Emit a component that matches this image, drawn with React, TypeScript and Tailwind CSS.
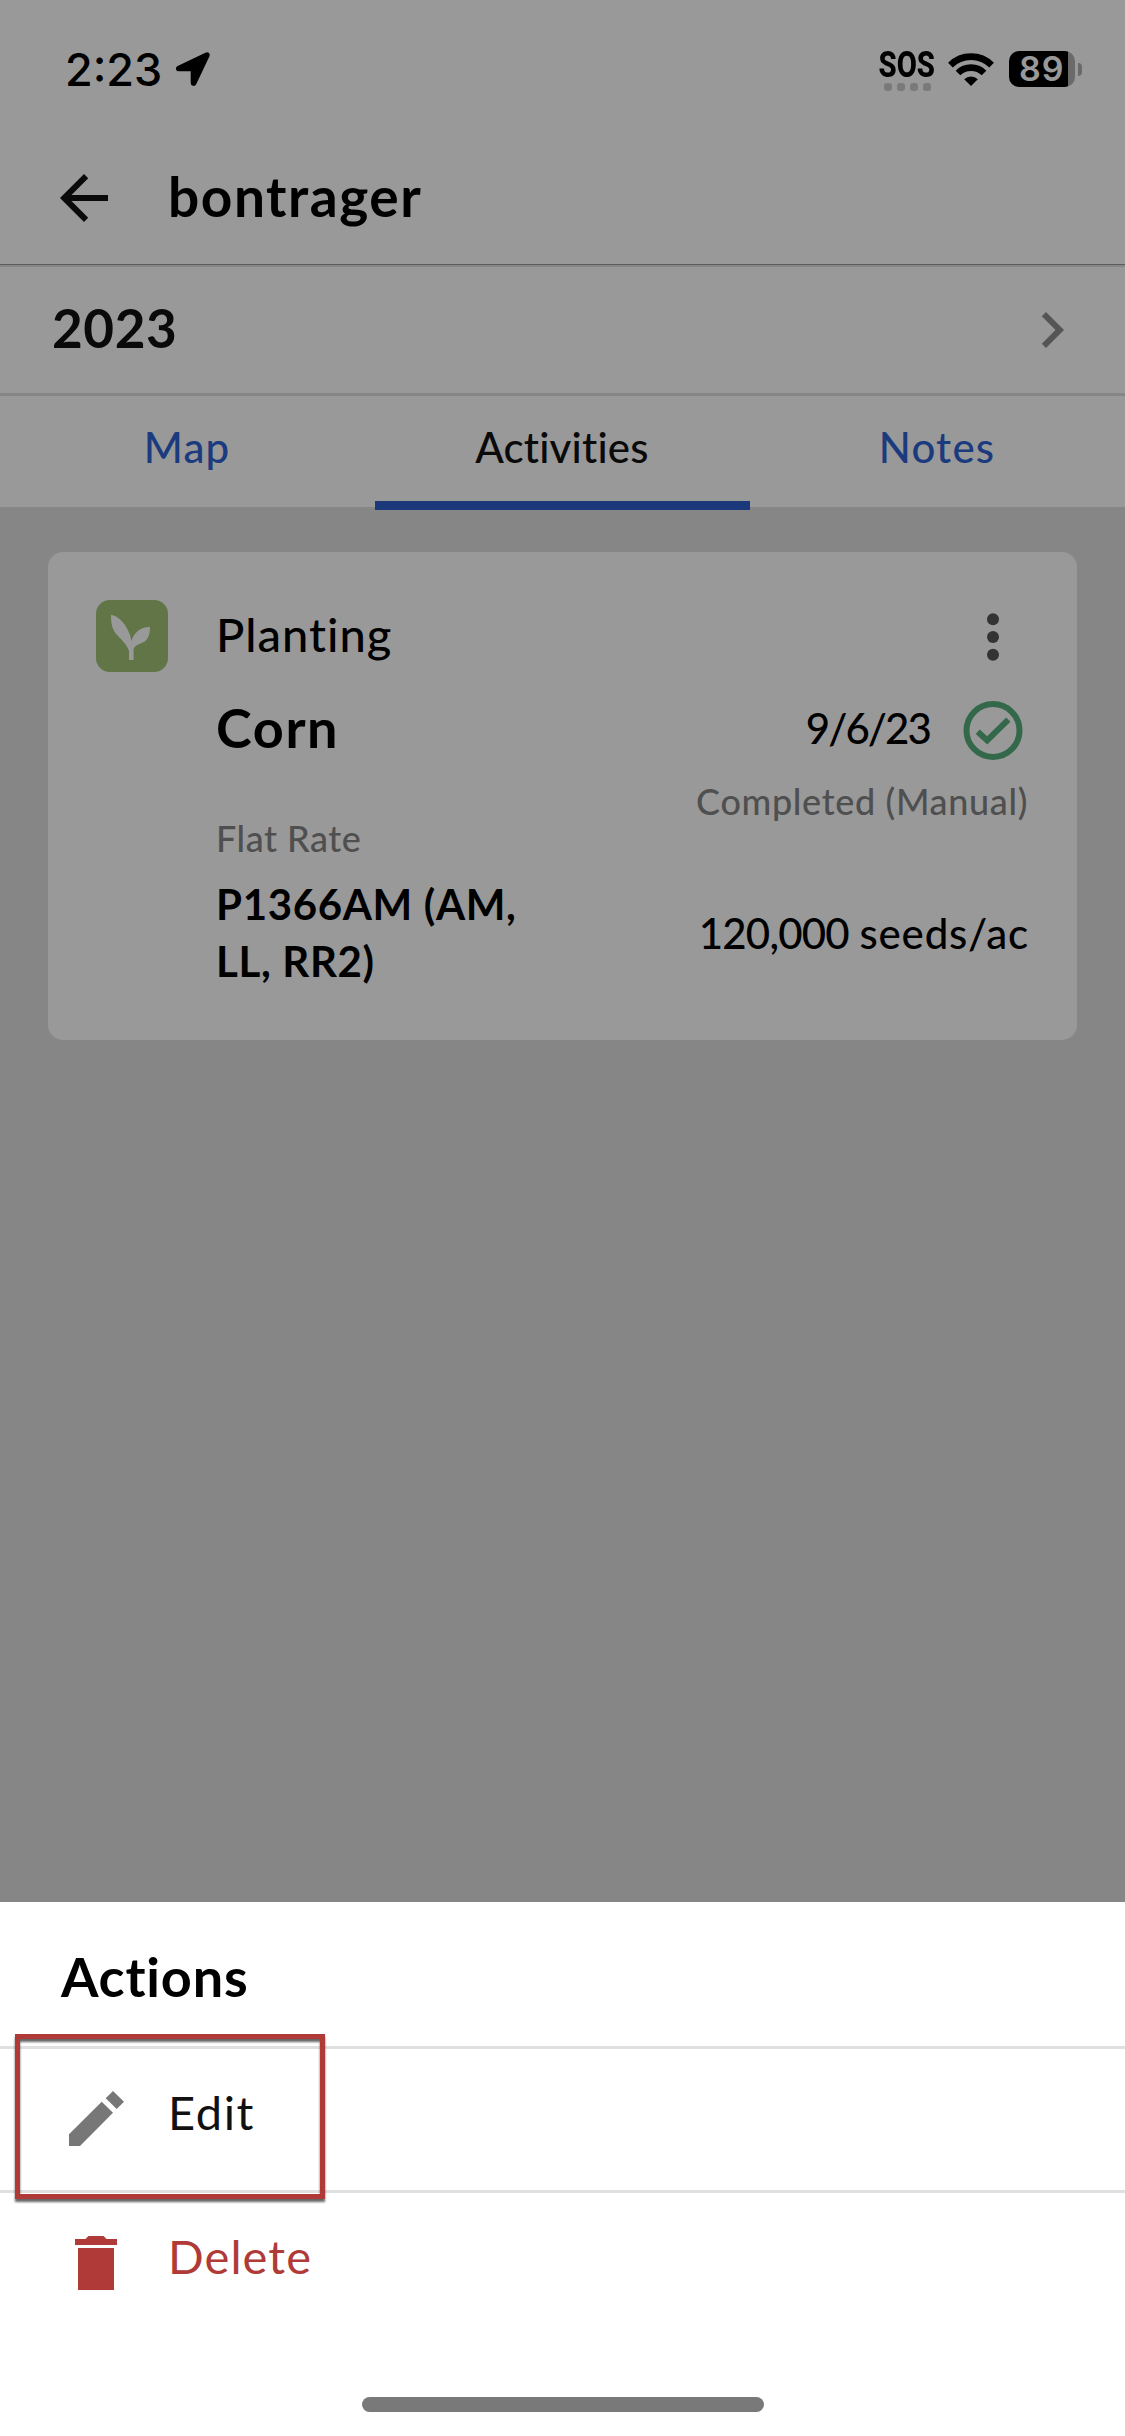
import React, { useState } from 'react';

const TABS = [
    { id: 'map', label: 'Map', spacing: 'tracking-[1.1px]' },
    { id: 'activities', label: 'Activities', spacing: 'tracking-[0.2px]' },
    { id: 'notes', label: 'Notes', spacing: 'tracking-[1.2px]' },
];

const StatusBar = () => (
    <div className="h-[138px] pl-[65px] pr-[43px] flex items-center justify-between text-black">
        <div className="flex items-center">
            <span className="w-[97px] font-[Inter,sans-serif] font-medium text-[45px] leading-none tracking-[0px]">2:23</span>
            <svg className="ml-[13px] w-9 h-9" viewBox="0 0 36 36">
                <path
                    d="M31.5 2.8 3.2 16.1c-1.6.8-1.1 2.9.6 2.9H17V32c0 1.8 2.3 2.2 3 .7L33.3 4.6c.6-1.3-.6-2.4-1.8-1.8Z"
                    fill="#000" stroke="#000" strokeWidth="2.6" strokeLinejoin="round"
                />
            </svg>
        </div>

        <div className="flex items-center">
            <div className="w-[54px] mt-1 flex flex-col items-center">
                <span className="font-[Roboto,sans-serif] font-extrabold text-[37px] leading-[28px] scale-x-[0.79]">SOS</span>
                <div className="mt-1 flex gap-[5px]">
                    {[0, 1, 2, 3].map((i) => (
                        <span key={i} className="w-2 h-2 rounded-[3px] bg-[#7a7a7a]" />
                    ))}
                </div>
            </div>
            <svg className="ml-[14px] w-[46px] h-[33px]" viewBox="0 0 46 33" fill="none" stroke="#000">
                <path d="M2.4 12.1a29.3 29.3 0 0 1 41.2 0" strokeWidth="6.6" />
                <path d="M10 20a18.5 18.5 0 0 1 26 0" strokeWidth="6.6" />
                <path d="M23 33 16.2 26.2a9.6 9.6 0 0 1 13.6 0Z" fill="#000" stroke="none" />
            </svg>
            {/* Bateria */}
            <div className="ml-[15px] w-[66px] h-9 rounded-[10px] bg-[linear-gradient(to_right,#000_59px,#6a6a6a_59px)] flex items-center">
                <span className="pl-[10px] font-[Inter,sans-serif] font-semibold text-[34px] leading-9 tracking-[1px] text-[#999]">89</span>
            </div>
            <span className="ml-[3px] w-1 h-[13px] rounded-r-full bg-[#6a6a6a]" />
        </div>
    </div>
);

const ActivityCard = () => (
    <div className="mx-12 mt-[45px] h-[488px] p-12 rounded-[15px] bg-[#999] flex text-black">
        <div className="w-[72px] h-[72px] rounded-[14px] bg-[#627547] shrink-0">
            <svg viewBox="0 0 72 72" className="w-full h-full" fill="#999">
                <path d="M15 15C25 16 34 30 35.4 41C38 33 44 27 54 27C54 36 51 41 46 43C41 44.5 38 46.5 37.6 49V60H33V51C31.5 46 27 41 22 36C16.5 30.5 15 25 15 15Z" />
            </svg>
        </div>

        <div className="ml-12 flex-1 flex flex-col">
            <div className="h-[72px] flex items-center justify-between">
                <span className="mb-[4px] text-[47px] font-medium tracking-[1px]">Planting</span>
                <svg className="mt-[2px] w-[72px] h-[72px]" viewBox="0 0 24 24" fill="#333">
                    <circle cx="12" cy="6.1" r="2" />
                    <circle cx="12" cy="12" r="2" />
                    <circle cx="12" cy="17.9" r="2" />
                </svg>
            </div>

            <div className="mt-[23px] h-[72px] flex items-center justify-between">
                <span className="mb-[8px] text-[54px] font-bold tracking-[1.6px]">Corn</span>
                <div className="flex items-center">
                    <span className="mr-[27px] mb-[6px] text-[42px] font-medium tracking-[-1.9px]">9/6/23</span>
                    <svg className="w-[72px] h-[72px]" viewBox="0 0 72 72" fill="none" stroke="#33694a" strokeWidth="6">
                        <circle cx="36" cy="35.5" r="26.5" />
                        <path d="M20.7 36.8 30.2 45.3 51.3 24.7" />
                    </svg>
                </div>
            </div>

            <div className="h-[107px] flex items-start justify-between text-[36px] leading-[48px] font-medium text-[#4f4f4f]">
                <span className="pt-[47px] tracking-[0.5px]">Flat Rate</span>
                <span className="pt-[10px] pr-px tracking-[0.65px]">Completed (Manual)</span>
            </div>

            <div className="mt-[2px] h-[114px] flex items-center justify-between text-[42px] leading-[57px]">
                <span className="w-[330px] font-bold tracking-[0.65px]">P1366AM (AM, LL, RR2)</span>
                <span className="font-medium">
                    <span className="tracking-[-0.8px]">120,000</span>{' '}
                    <span className="tracking-[0.8px]">seeds/ac</span>
                </span>
            </div>
        </div>
    </div>
);

const ActionSheet = () => (
    <div className="relative h-[534px] bg-white">
        <div className="h-[147px] pl-[61px] border-b-[3px] border-[#e0e0e0] flex items-center">
            <h2 className="mt-[5px] text-[54px] font-bold tracking-[0.8px] text-black">Actions</h2>
        </div>
        <button className="w-full h-[144px] pl-[60px] border-b-[3px] border-[#e0e0e0] flex items-center">
            <svg className="mb-[3px] w-[72px] h-[72px]" viewBox="0 0 72 72" fill="#777">
                <path d="M9 64V52.3L41.7 19.7 53 30.7 20 64Z" />
                <path d="M45.7 16.3 53 9 64 19.7 56.7 27Z" />
            </svg>
            <span className="ml-9 mb-[14px] text-[47px] tracking-[1.6px] text-[#111]">Edit</span>
        </button>
        <button className="w-full h-[141px] pl-[60px] flex items-center">
            <svg className="mb-[2px] w-[72px] h-[72px]" viewBox="0 0 24 24" fill="#b03a37">
                <path d="M6 21h12V7H6v14zM19 4h-3.5l-1-1h-5l-1 1H5v2h14V4z" />
            </svg>
            <span className="ml-9 mb-[14px] text-[47px] tracking-[1.1px] text-[#b03a37]">Delete</span>
        </button>

        {/* Destaque em volta do Edit */}
        <div className="absolute left-[15px] top-[132px] w-[310px] h-[165px] border-[5px] border-[#b03a37] drop-shadow-[0_3px_1px_rgba(0,0,0,0.6)]" />

        {/* Home indicator */}
        <div className="absolute left-[362px] bottom-6 w-[402px] h-[15px] rounded-full bg-[#797979]" />
    </div>
);

const App = () => {
    const [activeTab, setActiveTab] = useState('activities');

    return (
        <div className="w-[1125px] h-[2436px] overflow-hidden flex flex-col bg-[#868686] font-[Lato,sans-serif]">
            <header className="h-[267px] bg-[#999]">
                <StatusBar />
                <div className="h-[126px] pb-[6px] pl-12 flex items-center">
                    <svg className="w-[72px] h-[72px]" viewBox="0 0 24 24" fill="#0a0a0a">
                        <path d="M20 11H7.83l5.59-5.59L12 4l-8 8 8 8 1.41-1.41L7.83 13H20v-2z" />
                    </svg>
                    <h1 className="ml-12 mb-[5px] text-[55px] leading-[66px] font-bold tracking-[1.55px] text-black">bontrager</h1>
                </div>
                <div className="h-[3px] border-t border-[#5c5c5c] bg-[#868686]" />
            </header>

            <div className="h-[129px] pl-[52px] pr-[37px] bg-[#999] border-b-[3px] border-[#868686] flex items-center justify-between">
                <span className="mb-[5px] text-[53px] font-bold tracking-[0.6px] text-[#0a0a0a]">2023</span>
                <svg className="w-[72px] h-[72px]" viewBox="0 0 24 24" fill="#555">
                    <path d="M10 6 8.59 7.41 13.17 12l-4.58 4.59L10 18l6-6z" />
                </svg>
            </div>

            <nav className="h-[111px] bg-[#999] grid grid-cols-3">
                {TABS.map((tab) => (
                    <button
                        key={tab.id}
                        onClick={() => setActiveTab(tab.id)}
                        className={`relative pb-[8px] pr-px flex items-center justify-center text-[42px] font-medium ${tab.spacing} ${activeTab === tab.id ? 'text-[#0a0a0a]' : 'text-[#1b3b7e]'}`}
                    >
                        {tab.label}
                        {activeTab === tab.id && <span className="absolute inset-x-0 -bottom-[3px] h-[9px] bg-[#1b387a]" />}
                    </button>
                ))}
            </nav>

            <main className="flex-1 flow-root">
                <ActivityCard />
            </main>

            <ActionSheet />
        </div>
    );
};

export default App;
